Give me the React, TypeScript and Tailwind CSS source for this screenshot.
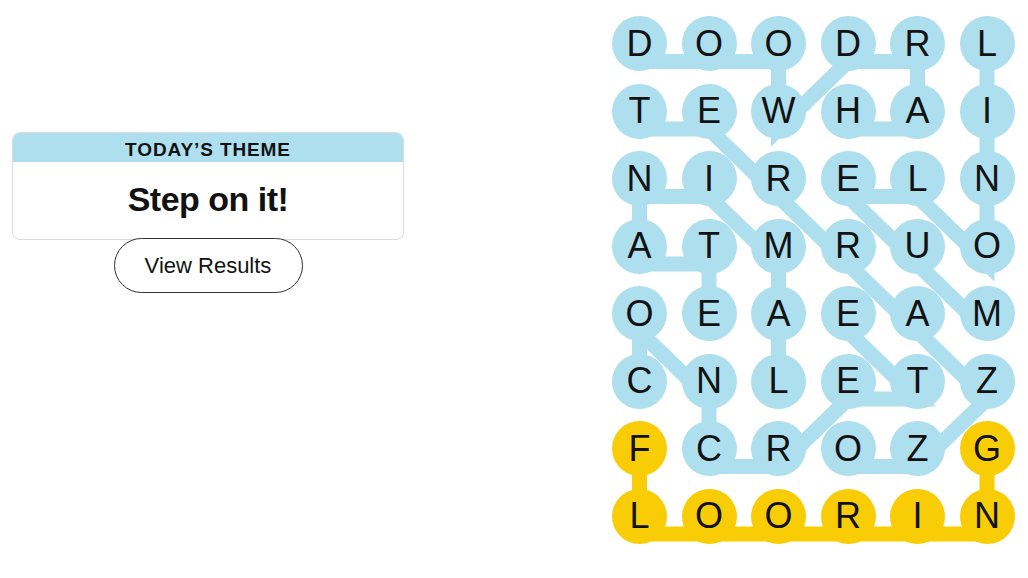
import React from 'react';

const LETTERS = [
  'DOODRL',
  'TEWHAI',
  'NIRELN',
  'ATMRUO',
  'OEAEAM',
  'CNLETZ',
  'FCROZG',
  'LOORIN',
];

type Cell = [number, number];

// found words, as [row, col] in the order they were traced
const WORDS: { cells: Cell[]; spangram?: boolean }[] = [
  { cells: [[1, 3], [1, 4], [0, 4], [0, 3], [1, 2], [0, 2], [0, 1], [0, 0]] }, // HARDWOOD
  { cells: [[1, 0], [1, 1], [2, 2], [3, 3], [4, 4], [5, 5], [6, 4], [6, 3]] }, // TERRAZZO
  { cells: [[0, 5], [1, 5], [2, 5], [3, 5], [2, 4], [2, 3], [3, 4], [4, 5]] }, // LINOLEUM
  { cells: [[5, 2], [4, 2], [3, 2], [2, 1], [2, 0], [3, 0], [3, 1], [4, 1]] }, // LAMINATE
  { cells: [[5, 0], [4, 0], [5, 1], [6, 1], [6, 2], [5, 3], [5, 4], [4, 3]] }, // CONCRETE
  { cells: [[6, 0], [7, 0], [7, 1], [7, 2], [7, 3], [7, 4], [7, 5], [6, 5]], spangram: true }, // FLOORING
];

const BLUE = '#aedfee';
const YELLOW = '#f8cd05';

const COL_STEP = 69.5;
const ROW_STEP = 67.5;
const RADIUS = 27.5;
const LINE_DROP = 18;

const isSpangram = (r: number, c: number) =>
  WORDS.some(w => w.spangram && w.cells.some(([wr, wc]) => wr === r && wc === c));

const Board: React.FC = () => {
  return (
    <div className="relative">
      <svg className="absolute left-0 top-0 overflow-visible" width={403} height={528}>
        {WORDS.map((w, i) => (
          <polyline
            key={i}
            points={w.cells
              .map(([r, c]) => `${RADIUS + c * COL_STEP},${RADIUS + r * ROW_STEP + LINE_DROP}`)
              .join(' ')}
            fill="none"
            stroke={w.spangram ? YELLOW : BLUE}
            strokeWidth={15}
            strokeLinejoin="miter"
          />
        ))}
      </svg>
      <div className="relative grid grid-cols-[repeat(6,55px)] gap-x-[14.5px] gap-y-[12.5px]">
        {LETTERS.map((row, r) =>
          row.split('').map((ch, c) => (
            <div
              key={`${r}-${c}`}
              className={`w-[55px] h-[55px] rounded-full flex items-center justify-center text-[36px] leading-none ${
                isSpangram(r, c) ? 'bg-[#f8cd05]' : 'bg-[#aedfee]'
              }`}
            >
              {ch}
            </div>
          ))
        )}
      </div>
    </div>
  );
};

const App: React.FC = () => {
  return (
    <div className="min-h-screen bg-white flex font-['Liberation_Sans',Arial,sans-serif] text-[#121212]">
      <div className="w-[392px] ml-[12px] mt-[132px] flex flex-col items-center shrink-0">
        <div className="w-full rounded-[8px] border border-[#dcdcdc] overflow-hidden">
          <div className="bg-[#aedfee] h-[29px] pt-[5px] flex items-center justify-center text-[19px] font-bold uppercase tracking-[0.9px]">
            Today’s Theme
          </div>
          <div className="h-[77px] pb-[3px] flex items-center justify-center text-[34px] font-bold tracking-[-0.5px]">
            Step on it!
          </div>
        </div>
        <button className="-mt-[2px] w-[189px] h-[55px] rounded-full border border-[#333333] bg-white text-[22px]">
          View Results
        </button>
      </div>
      <div className="ml-[208px] mt-[16px] shrink-0">
        <Board />
      </div>
    </div>
  );
};

export default App;
